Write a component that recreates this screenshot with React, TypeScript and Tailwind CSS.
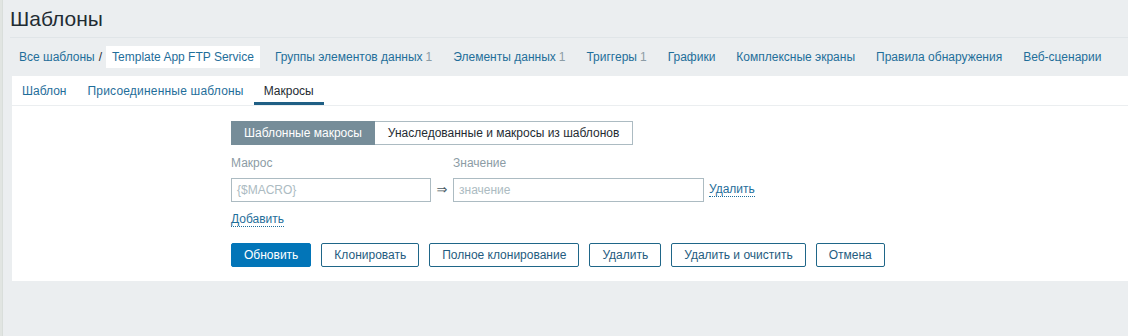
const navItems = [
  { label: "Группы элементов данных", count: "1" },
  { label: "Элементы данных", count: "1" },
  { label: "Триггеры", count: "1" },
  { label: "Графики" },
  { label: "Комплексные экраны" },
  { label: "Правила обнаружения" },
  { label: "Веб-сценарии" },
];

const buttons = ["Клонировать", "Полное клонирование", "Удалить", "Удалить и очистить", "Отмена"];

export default function App() {
  return (
    <div className="w-[1128px] h-[336px] bg-[#ebeef0] flex overflow-hidden font-['Liberation_Sans',Arial,sans-serif] text-[12px] text-[#1f2c33]">
      <div className="w-[3px] bg-[#e1e5e2] border-r border-[#d9dedb]" />
      <div className="flex-1 pl-[9px]">
        {/* header */}
        <div className="h-[38px] border-b border-[#e0e5e8] flex items-center -ml-[2px]">
          <h1 className="text-[21px] leading-[24px] text-[#1f2c33]">Шаблоны</h1>
        </div>

        {/* breadcrumbs + nav */}
        <div className="mt-[8px] h-[22px] flex items-center">
          <a className="pl-[7px] text-[#1f6e9a]">Все шаблоны</a>
          <span className="px-[4px] text-[#1f2c33]">/</span>
          <span className="h-[22px] px-[6px] bg-white flex items-center text-[#1f6e9a]">Template App FTP Service</span>
          <div className="flex items-center ml-[15px] gap-[21px]">
            {navItems.map((n) => (
              <a key={n.label} className="text-[#1f6e9a] whitespace-nowrap">
                {n.label}
                {n.count && <span className="ml-[3px] text-[#8c9ca5]">{n.count}</span>}
              </a>
            ))}
          </div>
        </div>

        {/* panel */}
        <div className="mt-[8px] bg-white h-[205px]">
          <div className="h-[30px] flex items-stretch border-b border-[#ebeef0] pl-[10px]">
            <a className="flex items-center text-[#1f6e9a]">Шаблон</a>
            <a className="flex items-center ml-[21px] text-[#1f6e9a] tracking-[0.2px]">Присоединенные шаблоны</a>
            <div className="ml-[10px] px-[10px] flex items-center text-[#1f2c33] border-b-[3px] border-[#1f5f85] pt-[3px]">Макросы</div>
          </div>

          <div className="pl-[219px] pt-[15px]">
            <div className="flex h-[24px] w-fit">
              <div className="px-[12px] flex items-center bg-[#768d99] border border-[#768d99] text-white">Шаблонные макросы</div>
              <div className="px-[13px] flex items-center border border-l-0 border-[#acbbc2] text-[#1f2c33]">
                Унаследованные и макросы из шаблонов
              </div>
            </div>

            <div className="mt-[10px] flex text-[#8c9ca5] h-[16px] items-center">
              <span className="w-[222px]">Макрос</span>
              <span>Значение</span>
            </div>

            <div className="mt-[7px] flex items-center h-[24px]">
              <div className="w-[200px] h-[24px] border border-[#acbbc2] flex items-center px-[5px] text-[#acbbc2]">{"{$MACRO}"}</div>
              <span className="w-[22px] text-center text-[#4a5a63] text-[13px] font-['DejaVu_Sans',sans-serif]">⇒</span>
              <div className="w-[251px] h-[24px] border border-[#acbbc2] flex items-center px-[5px] text-[#acbbc2]">значение</div>
              <a className="ml-[5px] text-[#1f6e9a] border-b border-dotted border-[#1f6e9a] leading-[13px]">Удалить</a>
            </div>

            <div className="mt-[10px] h-[16px] flex items-center">
              <a className="text-[#1f6e9a] border-b border-dotted border-[#1f6e9a] leading-[13px]">Добавить</a>
            </div>

            <div className="mt-[15px] flex gap-[10px]">
              <button className="h-[24px] px-[12px] bg-[#0275b8] border border-[#0275b8] text-white rounded-[2px]">Обновить</button>
              {buttons.map((b) => (
                <button
                  key={b}
                  className="h-[24px] px-[12px] bg-white border border-[#1f6688] text-[#1f5c80] rounded-[2px]"
                >
                  {b}
                </button>
              ))}
            </div>
          </div>
        </div>
      </div>
    </div>
  );
}
